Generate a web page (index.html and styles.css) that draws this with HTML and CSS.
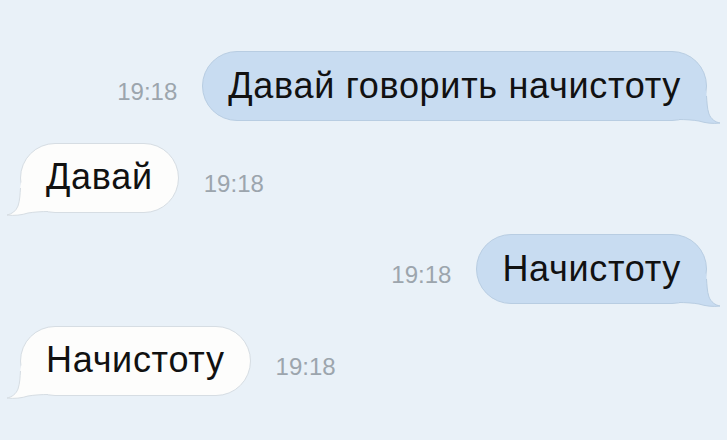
FILE: index.html
```html
<!DOCTYPE html>
<html lang="ru">
<head>
<meta charset="utf-8">
<title>Чат</title>
<link rel="stylesheet" href="styles.css">
</head>
<body>
<main class="chat">
  <div class="row row-out">
    <span class="time">19:18</span>
    <div class="bubble bubble-out">Давай говорить начистоту
      <svg class="tail" viewBox="0 0 44 36" aria-hidden="true">
        <path class="tail-fill" d="M27 0 L27.5 4 C28 12 28 18 30 24 C32 29 36 32 41 33 C34 34 26 33 20 31 C14 30 6 29.5 0 29.5 L0 25 Z"/>
        <path class="tail-line" d="M27.5 6 C28 12 28 18 30 24 C32 29 36 32 41 33 C34 34 26 33 20 31 C14 30 6 29.5 0 29.5"/>
      </svg>
    </div>
  </div>
  <div class="row row-in">
    <div class="bubble bubble-in">Давай
      <svg class="tail" viewBox="0 0 44 36" aria-hidden="true">
        <path class="tail-fill" d="M27 0 L27.5 4 C28 12 28 18 30 24 C32 29 36 32 41 33 C34 34 26 33 20 31 C14 30 6 29.5 0 29.5 L0 25 Z"/>
        <path class="tail-line" d="M27.5 6 C28 12 28 18 30 24 C32 29 36 32 41 33 C34 34 26 33 20 31 C14 30 6 29.5 0 29.5"/>
      </svg>
    </div>
    <span class="time">19:18</span>
  </div>
  <div class="row row-out">
    <span class="time">19:18</span>
    <div class="bubble bubble-out">Начистоту
      <svg class="tail" viewBox="0 0 44 36" aria-hidden="true">
        <path class="tail-fill" d="M27 0 L27.5 4 C28 12 28 18 30 24 C32 29 36 32 41 33 C34 34 26 33 20 31 C14 30 6 29.5 0 29.5 L0 25 Z"/>
        <path class="tail-line" d="M27.5 6 C28 12 28 18 30 24 C32 29 36 32 41 33 C34 34 26 33 20 31 C14 30 6 29.5 0 29.5"/>
      </svg>
    </div>
  </div>
  <div class="row row-in">
    <div class="bubble bubble-in">Начистоту
      <svg class="tail" viewBox="0 0 44 36" aria-hidden="true">
        <path class="tail-fill" d="M27 0 L27.5 4 C28 12 28 18 30 24 C32 29 36 32 41 33 C34 34 26 33 20 31 C14 30 6 29.5 0 29.5 L0 25 Z"/>
        <path class="tail-line" d="M27.5 6 C28 12 28 18 30 24 C32 29 36 32 41 33 C34 34 26 33 20 31 C14 30 6 29.5 0 29.5"/>
      </svg>
    </div>
    <span class="time">19:18</span>
  </div>
</main>
</body>
</html>
```
FILE: styles.css
```css
html, body {
  margin: 0;
  padding: 0;
}

body {
  width: 727px;
  height: 440px;
  overflow: hidden;
  background: #e9f1f8;
  font-family: "Liberation Sans", Arial, sans-serif;
  color: #111111;
}

.chat {
  display: flex;
  flex-direction: column;
  gap: 21.5px;
  padding: 51px 20px 0 20px;
}

.row {
  display: flex;
  align-items: center;
  gap: 25px;
}

.row-out {
  justify-content: flex-end;
}

.row-in {
  justify-content: flex-start;
}

.bubble {
  position: relative;
  box-sizing: border-box;
  height: 70px;
  display: flex;
  align-items: center;
  padding: 0 25px 1px 25px;
  border-radius: 35px;
  font-size: 36px;
  letter-spacing: 0.7px;
  white-space: nowrap;
}

.bubble-out {
  background: #c8dcf1;
  border: 1px solid #b8cde2;
}

.bubble-in {
  background: #fdfdfc;
  border: 1px solid #d6dde3;
}

.time {
  font-size: 24px;
  color: #9ca5ad;
  margin-top: 12px;
}

/* Tail: drawn for the right-hand corner, mirrored for incoming bubbles */
.tail {
  position: absolute;
  width: 44px;
  height: 36px;
  bottom: -6px;
}

.bubble-out .tail {
  right: -17px;
}

.bubble-in .tail {
  left: -17px;
  transform: scaleX(-1);
}

.bubble-out .tail-fill {
  fill: #c8dcf1;
}

.bubble-in .tail-fill {
  fill: #fdfdfc;
}

.tail-line {
  fill: none;
  stroke-width: 1;
}

.bubble-out .tail-line {
  stroke: #b8cde2;
}

.bubble-in .tail-line {
  stroke: #d6dde3;
}
```
